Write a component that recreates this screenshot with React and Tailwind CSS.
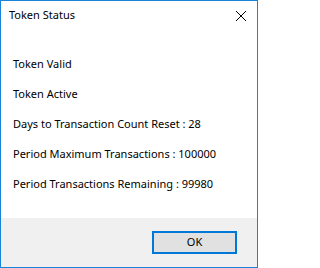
const lines = [
  'Token Valid',
  'Token Active',
  'Days to Transaction Count Reset : 28',
  'Period Maximum Transactions : 100000',
  'Period Transactions Remaining : 99980',
]

export default function App() {
  return (
    <div className="flex h-[268px] w-[258px] flex-col border border-[#1883d7] bg-white font-['Segoe_UI','Noto_Sans',sans-serif] text-[11px] text-black">
      {/* Title bar */}
      <div className="flex h-[29px] items-center justify-between">
        <span className="pl-[8px]">Token Status</span>
        <div className="flex h-[29px] w-[32px] items-center justify-center">
          <svg width="10" height="10" viewBox="0 0 10 10">
            <path d="M0 0 L10 10 M10 0 L0 10" stroke="#000" strokeWidth="1" />
          </svg>
        </div>
      </div>

      {/* Body */}
      <div className="flex flex-1 flex-col pl-[12px] pt-[19px]">
        {lines.map((t) => (
          <div key={t} className="flex h-[30px] items-center">
            {t}
          </div>
        ))}
      </div>

      {/* Footer */}
      <div className="flex h-[49px] items-center justify-end bg-[#f0f0f0] pr-[20px]">
        <button className="h-[23px] w-[85px] border-2 border-[#0078d7] bg-[#e1e1e1] text-[11px]">
          OK
        </button>
      </div>
    </div>
  )
}
